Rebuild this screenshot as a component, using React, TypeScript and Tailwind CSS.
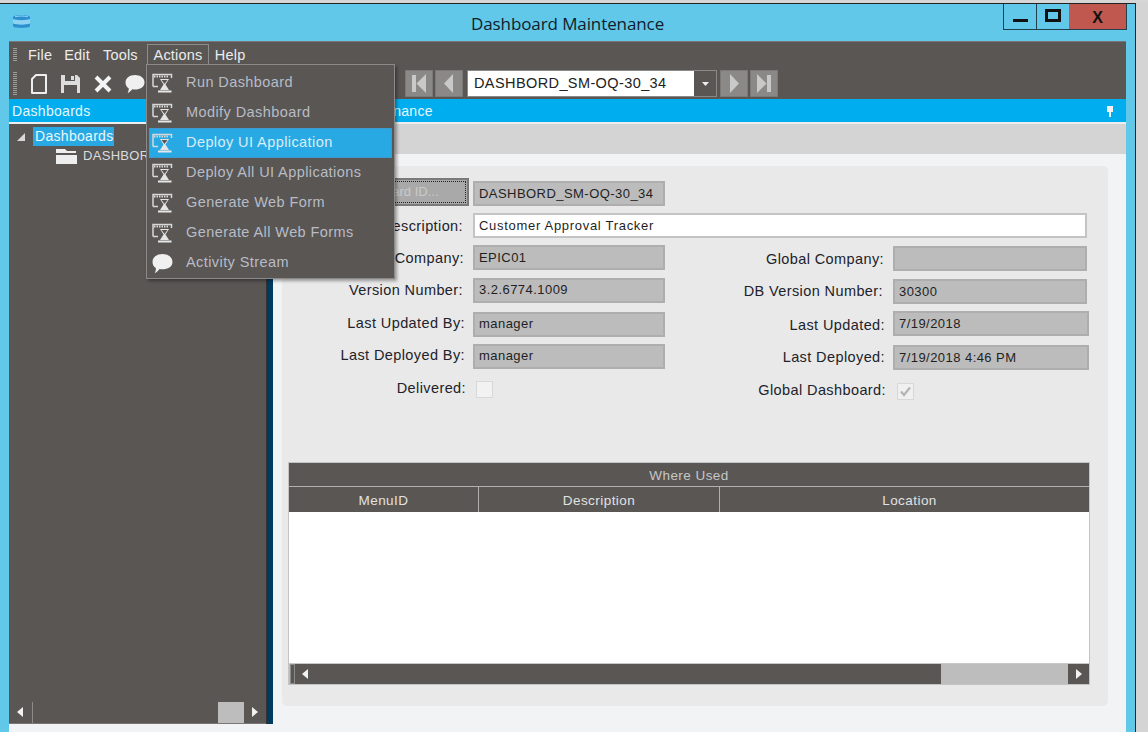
import React from 'react';

const menuItems = [
  'Run Dashboard',
  'Modify Dashboard',
  'Deploy UI Application',
  'Deploy All UI Applications',
  'Generate Web Form',
  'Generate All Web Forms',
];

// little window with an hourglass, used by most Actions entries
const HourglassIcon = () => (
  <svg width="21" height="20" viewBox="0 0 21 20" fill="none">
    <path d="M1 13.5V1.5H19.5V5" stroke="#d8d8d8" strokeWidth="1.5" />
    <path d="M1 13.5H6" stroke="#d8d8d8" strokeWidth="1.5" />
    <path d="M2 3.5H17" stroke="#d8d8d8" strokeWidth="2" strokeDasharray="1.5 1" />
    <path d="M8 6H17L13.5 11.5L17 17H8L11.5 11.5Z" fill="#e4e4e4" />
    <path d="M9.5 7H15.5L12.5 11Z" fill="#595654" />
    <path d="M6 18.5H19.5" stroke="#e8e8e8" strokeWidth="2" />
  </svg>
);

const Bubble = ({ size = 20 }: { size?: number }) => (
  <svg width={size} height={size} viewBox="0 0 20 20">
    <path d="M10 1C15 1 19.5 3.7 19.5 8.5C19.5 13 15 15.5 10 15.5C9 15.5 8 15.4 7.2 15.2C6 16.8 4.2 18.6 2.6 19.2C3.4 17.6 3.8 15.8 3.7 14.2C1.6 13 .5 11 .5 8.5C.5 3.7 5 1 10 1Z" fill="#f0f0f0" />
  </svg>
);

const Arrow = ({ dir, color = '#f2f2f2' }: { dir: 'left' | 'right'; color?: string }) => (
  <svg width="6" height="10" viewBox="0 0 6 10">
    <path d={dir === 'left' ? 'M6 0V10L0 5Z' : 'M0 0V10L6 5Z'} fill={color} />
  </svg>
);

const Grip = ({ height }: { height: number }) => (
  <svg className="ml-[4px]" width="4" height={height} viewBox={`0 0 4 ${height}`}>
    <line x1="2" y1="0" x2="2" y2={height} stroke="#a09e9c" strokeWidth="4" strokeDasharray="1 1" />
  </svg>
);

const NavButton = ({ kind }: { kind: 'first' | 'prev' | 'next' | 'last' }) => (
  <div className="w-[28px] h-[27px] bg-[#8b8987] border border-[#7c7a78] flex items-center justify-center">
    <svg width="16" height="19" viewBox="0 0 16 19" fill="#c9c9c9">
      {kind === 'first' && <path d="M1 1H5V18H1ZM15 0V19L5.5 9.5Z" />}
      {kind === 'prev' && <path d="M12 0V19L3 9.5Z" />}
      {kind === 'next' && <path d="M4 0V19L13 9.5Z" />}
      {kind === 'last' && <path d="M1 0V19L10.5 9.5ZM11 1H15V18H11Z" />}
    </svg>
  </div>
);

const Field = ({ value, className }: { value?: string; className: string }) => (
  <div className={`h-[25px] bg-[#bcbcbc] border-2 border-[#aeaeae] pl-[4px] flex items-center text-[13px] tracking-[0.45px] text-[#1f1f1f] ${className}`}>
    {value}
  </div>
);

const Label = ({ text, className = '' }: { text: string; className?: string }) => (
  <div className={`flex items-center justify-end text-[14.5px] tracking-[0.4px] text-[#22222a] ${className}`}>{text}</div>
);

export default function App() {
  return (
    <div className="relative w-[1148px] h-[739px] overflow-hidden bg-white font-['Liberation_Sans',Arial,sans-serif]">
      <div className="h-[3px] bg-[#d6d6d6]" />
      <div className="flex h-[729px]">
        <div className="w-[1136px] border-t border-r border-[#222] bg-[#62c8ea] flex flex-col">
          {/* title bar */}
          <div className="h-[37px] flex shrink-0">
            <svg className="ml-[12px] mt-[10px]" width="19" height="15" viewBox="0 0 19 15">
              <path d="M1 3C1 .5 18 .5 18 3V12C18 14.5 1 14.5 1 12Z" fill="#2b8fd0" />
              <path d="M1 5C5 6.5 14 6.5 18 5V9.5C14 11 5 11 1 9.5Z" fill="#8fd3f2" />
              <path d="M3 2.8C7 1.8 12 1.8 16 2.8" stroke="#8fd3f2" fill="none" />
            </svg>
            <div className="ml-[440px] mt-[8px] text-[17px] leading-[24px] text-[#10202c] font-['Open_Sans',sans-serif] tracking-[-0.1px]">
              Dashboard Maintenance
            </div>
            <div className="ml-auto mr-[8px] h-[26px] flex border border-t-0 border-[#23404f]">
              <div className="w-[33px] border-r border-[#23404f] flex items-end justify-center pb-[7px]">
                <div className="w-[15px] h-[3px] bg-[#111]" />
              </div>
              <div className="w-[32px] flex justify-center pt-[5px]">
                <div className="w-[16px] h-[13px] border-[3px] border-[#111]" />
              </div>
              <div className="w-[57px] bg-[#c0584f] flex justify-center pt-[2px] text-[16px] font-bold text-[#111]">X</div>
            </div>
          </div>

          {/* window body */}
          <div className="ml-[9px] mr-[9px] flex-1 flex flex-col min-h-0 bg-[#f2f3f5]">
            <div className="h-[27px] shrink-0 bg-[#595654] flex items-center text-[14.5px] tracking-[0.2px] text-[#ececec] border-t border-[#777]">
              <Grip height={14} />
              <span className="ml-[11px] pt-[2px]">File</span>
              <span className="ml-[12px] pt-[2px]">Edit</span>
              <span className="ml-[13px] pt-[2px]">Tools</span>
              <span className="ml-[77px] pt-[2px]">Help</span>
            </div>
            <div className="h-[31px] shrink-0 bg-[#595654] flex items-center">
              <Grip height={24} />
              <svg className="ml-[13px]" width="18" height="20" viewBox="0 0 18 20" fill="none">
                <path d="M6 1H16V19H2V5Z" stroke="#eee" strokeWidth="2" strokeLinejoin="round" />
              </svg>
              <svg className="ml-[12px]" width="21" height="20" viewBox="0 0 21 20">
                <path d="M1 1H17L20 4V19H1Z" fill="#ddd" />
                <rect x="5" y="1" width="10" height="6" fill="#595654" />
                <rect x="11" y="2" width="3" height="4" fill="#ddd" />
                <rect x="4" y="11" width="13" height="8" fill="#595654" />
              </svg>
              <svg className="ml-[13px]" width="18" height="18" viewBox="0 0 18 18">
                <path d="M2 2L16 16M16 2L2 16" stroke="#f4f4f4" strokeWidth="4" />
              </svg>
              <div className="ml-[13px] flex"><Bubble size={20} /></div>
              <div className="ml-[260px] flex">
                <NavButton kind="first" />
                <div className="ml-[2px]"><NavButton kind="prev" /></div>
              </div>
              <div className="ml-[4px] w-[250px] h-[27px] flex bg-white border border-[#8b8987]">
                <div className="flex-1 pl-[6px] pt-[1px] flex items-center text-[14.5px] tracking-[0.4px] text-[#222] whitespace-nowrap">DASHBORD_SM-OQ-30_34</div>
                <div className="w-[22px] bg-[#595654] flex items-center justify-center">
                  <svg width="7" height="4" viewBox="0 0 7 4"><path d="M0 0H7L3.5 4Z" fill="#eee" /></svg>
                </div>
              </div>
              <div className="ml-[3px] flex">
                <NavButton kind="next" />
                <div className="ml-[2px]"><NavButton kind="last" /></div>
              </div>
            </div>
            <div className="h-[23px] shrink-0 pt-[1px] bg-[#00aeef] flex items-center text-[14px] tracking-[0.3px] text-[#e8f6fc]">
              <span className="ml-[3px] w-[262px]">Dashboards</span>
              <span className="w-[152px] whitespace-nowrap">Dashboard Maintenance</span>
              <svg className="ml-auto mr-[12px]" width="8" height="11" viewBox="0 0 8 11">
                <path d="M1 0H7V6H5V11H3V6H1Z" fill="#f2f2f2" />
              </svg>
            </div>
            <div className="h-[2px] shrink-0 bg-[#eeeeee]" />

            <div className="flex-1 flex min-h-0">
              {/* tree panel */}
              <div className="w-[257px] shrink-0 bg-[#595654] flex flex-col border-b border-[#777] h-[600px]">
                <div className="flex-1 pt-[3px] overflow-hidden text-[14px] tracking-[0.3px] text-[#dcdcdc]">
                  <div className="flex items-center h-[19px]">
                    <svg className="ml-[8px]" width="8" height="8" viewBox="0 0 8 8"><path d="M8 0V8H0Z" fill="#d8d8d8" /></svg>
                    <span className="ml-[8px] w-[81px] h-[19px] bg-[#29a9e3] pl-[2px] leading-[19px] text-[#eaf7fd]">Dashboards</span>
                  </div>
                  <div className="flex items-center h-[20px] whitespace-nowrap">
                    <svg className="ml-[47px]" width="21" height="16" viewBox="0 0 21 16">
                      <path d="M0 1H9L11 3H20V5H0Z M0 7H21V16H0Z" fill="#eee" />
                    </svg>
                    <span className="ml-[6px] text-[13px]">DASHBORD_SM-OQ-30_34</span>
                  </div>
                </div>
                <div className="h-[22px] flex items-center">
                  <div className="ml-[8px]"><Arrow dir="left" /></div>
                  <div className="ml-[9px] w-px h-[21px] bg-[#8d8b89]" />
                  <div className="ml-[185px] w-[26px] h-[21px] bg-[#bdbdbd]" />
                  <div className="ml-[8px]"><Arrow dir="right" /></div>
                </div>
              </div>
              <div className="w-px h-[600px] shrink-0 bg-[#333]" />
              <div className="w-[6px] h-[600px] shrink-0 bg-[#003a5e]" />

              {/* form panel */}
              <div className="flex-1 flex flex-col min-w-0">
                <div className="h-[30px] shrink-0 bg-[#d4d4d4]" />
                <div className="h-[570px] shrink-0 pt-[12px] pl-[9px] pr-[18px]">
                  <div className="h-[540px] rounded-[5px] bg-[#e9e9e9] pt-[12px]">
                    <div className="grid grid-cols-[191px_192px_228px_196px] items-start">
                      <div className="col-span-1 flex justify-end h-[28px] pr-[4px]">
                        <div className="w-[152px] h-[28px] bg-[#a9a9a9] border-2 border-[#7b7a78] p-[1px] text-[13px] text-[#c9c9c9]">
                          <div className="h-full border border-dotted border-[#222] flex items-center justify-center">Dashboard ID...</div>
                        </div>
                      </div>
                      <Field value="DASHBORD_SM-OQ-30_34" className="mt-[3px]" />
                      <div className="col-span-2" />

                      <Label text="Description:" className="h-[25px] mt-[7px] pt-[2px] pr-[10px]" />
                      <div className="col-span-3 mt-[7px] w-[614px] h-[25px] bg-white border-2 border-[#c4c4c4] pl-[4px] flex items-center text-[13px] tracking-[0.7px] text-[#1f1f1f]">
                        Customer Approval Tracker
                      </div>

                      <Label text="Company:" className="h-[25px] mt-[7px] pt-[2px] pr-[9px]" />
                      <Field value="EPIC01" className="mt-[7px]" />
                      <Label text="Global Company:" className="h-[25px] mt-[8px] pt-[2px] pr-[9px]" />
                      <Field className="mt-[8px] w-[194px]" />

                      <Label text="Version Number:" className="h-[25px] mt-[7px] pr-[10px]" />
                      <Field value="3.2.6774.1009" className="mt-[7px] pb-[2px]" />
                      <Label text="DB Version Number:" className="h-[25px] mt-[8px] pr-[10px]" />
                      <Field value="30300" className="mt-[8px] w-[194px]" />

                      <Label text="Last Updated By:" className="h-[25px] mt-[8px] pb-[2px] pr-[8px]" />
                      <Field value="manager" className="mt-[8px] pb-[2px] tracking-[0.7px]" />
                      <Label text="Last Updated:" className="h-[25px] mt-[7px] pt-[4px] pr-[8px]" />
                      <Field value="7/19/2018" className="mt-[7px] pl-[3px] tracking-[0.3px]" />

                      <Label text="Last Deployed By:" className="h-[25px] mt-[7px] pb-[2px] pr-[8px]" />
                      <Field value="manager" className="mt-[7px] pb-[2px] tracking-[0.7px]" />
                      <Label text="Last Deployed:" className="h-[25px] mt-[8px] pr-[8px]" />
                      <Field value="7/19/2018 4:46 PM" className="mt-[8px] pl-[3px] tracking-[0.3px]" />

                      <Label text="Delivered:" className="h-[18px] mt-[10px] pr-[7px]" />
                      <div className="mt-[11px] ml-[3px] w-[17px] h-[17px] bg-[#f2f2f2] border border-[#d8d8d8]" />
                      <Label text="Global Dashboard:" className="h-[18px] mt-[12px] pr-[7px]" />
                      <div className="mt-[13px] ml-[4px] w-[17px] h-[17px] bg-[#f0f0f0] border border-[#d8d8d8] flex items-center justify-center">
                        <svg width="13" height="11" viewBox="0 0 13 11" fill="none"><path d="M2 5.5L5 9L11 1.5" stroke="#b4b4b4" strokeWidth="2.2" /></svg>
                      </div>
                    </div>

                    {/* where used grid */}
                    <div className="ml-[6px] mt-[62px] w-[802px] h-[223px] border-[1.5px] border-[#c4c4c4] bg-white flex flex-col text-[13.5px] tracking-[0.45px]">
                      <div className="h-[24px] shrink-0 pt-[3px] bg-[#595654] border-b border-[#b0b0b0] flex items-center justify-center text-[#c6c6c6]">Where Used</div>
                      <div className="h-[25px] shrink-0 bg-[#595654] flex text-[#e2e2e2]">
                        <div className="w-[190px] pt-[3px] border-r border-[#b0b0b0] flex items-center justify-center">MenuID</div>
                        <div className="w-[241px] pt-[3px] border-r border-[#b0b0b0] flex items-center justify-center">Description</div>
                        <div className="flex-1 pt-[3px] pl-[10px] flex items-center justify-center">Location</div>
                      </div>
                      <div className="flex-1 bg-white" />
                      <div className="h-[21px] shrink-0 flex bg-[#bdbdbd] border-t border-[#c8c8c8]">
                        <div className="ml-[1px] w-[5px] bg-[#595654] border border-[#8a8a8a]" />
                        <div className="w-[646px] bg-[#595654] flex items-center pl-[7px]"><Arrow dir="left" /></div>
                        <div className="flex-1" />
                        <div className="w-[21px] bg-[#595654] flex items-center justify-center"><Arrow dir="right" /></div>
                      </div>
                    </div>
                  </div>
                </div>
              </div>
            </div>
          </div>
        </div>
        <div className="flex-1 bg-[#d4d4d4]" />
      </div>

      {/* open Actions menu, drawn over the window */}
      <div className="absolute left-[147px] top-[44px] w-[62px] h-[21px] pt-[2px] border border-[#8f8d8b] bg-[#595654] flex items-center justify-center text-[14.5px] tracking-[0.2px] text-[#ececec]">
        Actions
      </div>
      <div className="absolute left-[146px] top-[64px] w-[249px] h-[215px] bg-[#595654] border border-[#8c8a88] shadow-[2px_2px_3px_rgba(0,0,0,0.35)] pt-[3px] px-[2px] text-[14.5px] tracking-[0.42px] text-[#b8bcc6]">
        {menuItems.map((label) => {
          const active = label === 'Deploy UI Application';
          return (
            <div
              key={label}
              className={`h-[30px] flex items-center ${active ? 'pl-[2px] bg-[#29a9e3] border border-[#3f98cf] text-[#d9edf8]' : 'pl-[3px]'}`}
            >
              <HourglassIcon />
              <span className="ml-[13px]">{label}</span>
            </div>
          );
        })}
        <div className="h-[30px] flex items-center pl-[3px]">
          <Bubble size={21} />
          <span className="ml-[13px]">Activity Stream</span>
        </div>
      </div>
    </div>
  );
}
